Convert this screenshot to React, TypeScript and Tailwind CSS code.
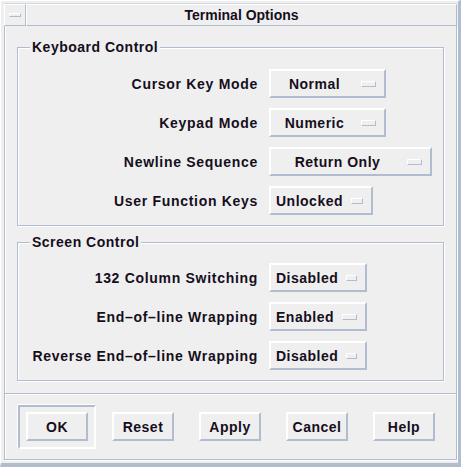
const raised2 = "border-2 border-t-white border-l-white border-r-[#b1bccf] border-b-[#b1bccf]"
const raised1 = "border border-t-white border-l-white border-r-[#b1bccf] border-b-[#b1bccf]"

const keyboardRows = [
    { label: "Cursor Key Mode", value: "Normal", w: "w-[117px]" },
    { label: "Keypad Mode", value: "Numeric", w: "w-[117px]" },
    { label: "Newline Sequence", value: "Return Only", w: "w-[163px]" },
    { label: "User Function Keys", value: "Unlocked", w: "w-[104px]" },
]

const screenRows = [
    { label: "132 Column Switching", value: "Disabled", w: "w-[98px]" },
    { label: "End–of–line Wrapping", value: "Enabled", w: "w-[98px]" },
    { label: "Reverse End–of–line Wrapping", value: "Disabled", w: "w-[98px]" },
]

const OptionMenu = ({ value, w }: { value: string; w: string }) => (
    <div className={`${w} h-[29px] flex items-center pl-[5px] pr-[8px] ${raised2}`}>
        <span className="flex-1 text-center whitespace-nowrap">{value}</span>
        <span className={`ml-[8px] w-[15px] h-[6px] ${raised1}`} />
    </div>
)

const Group = ({ title, rows, h, pt }: { title: string; rows: typeof keyboardRows; h: string; pt: string }) => (
    <div
        className={`relative mx-[12px] w-[427px] ${h} ${pt} pb-[10px] border border-[#b1bccf] shadow-[inset_1px_1px_0_#fff,1px_1px_0_#fff] flex flex-col gap-[10px]`}>
        <span className="absolute top-[-9px] left-[12px] px-[2px] bg-[#efefef] leading-[16px]">{title}</span>
        {rows.map((r) => (
            <div key={r.label} className="flex items-center">
                <span className="w-[240px] mr-[11px] text-right whitespace-nowrap tracking-[0.7px]">{r.label}</span>
                <OptionMenu value={r.value} w={r.w} />
            </div>
        ))}
    </div>
)

const PushButton = ({ label }: { label: string }) => (
    <div className={`w-[62px] h-[29px] flex items-center justify-center ${raised2}`}>{label}</div>
)

const App = () => {
    return (
        <div className="w-[466px] h-[470px] bg-white">
            <div
                className="w-[461px] h-[467px] bg-[#efefef] border-l border-t border-l-white border-t-white border-r-[3px] border-b-[4px] border-r-[#b1bccf] border-b-[#b1bccf] pl-[3px] pr-[1px] pt-[2px] font-['Liberation_Sans',sans-serif] font-bold text-[14px] leading-[16px] text-[#160e1c] tracking-[0.5px]">
                <div className="flex h-[23px] border-t border-t-[#d4d8e0]">
                    <div className={`w-[22px] flex items-center justify-center ${raised1}`}>
                        <span className={`w-[12px] h-[4px] ${raised1}`} />
                    </div>
                    <div className={`flex-1 flex items-center justify-center tracking-normal ${raised1}`}>
                        Terminal Options
                    </div>
                </div>

                <div className="h-[434px] flex flex-col border-l border-r border-b border-[#b1bccf] shadow-[inset_1px_0_0_#fff,1px_1px_0_#fff]">
                    <div className="mt-[21px]">
                        <Group title="Keyboard Control" rows={keyboardRows} h="h-[179px]" pt="pt-[21px]" />
                    </div>
                    <div className="mt-[16px]">
                        <Group title="Screen Control" rows={screenRows} h="h-[139px]" pt="pt-[20px]" />
                    </div>

                    <div className="mt-[12px] border-t border-b border-t-[#b1bccf] border-b-white" />

                    <div className="mt-[9px] h-[45px] flex items-center pl-[13px]">
                        <div className="w-[78px] h-[44px] flex items-center justify-center border-2 border-t-[#b1bccf] border-l-[#b1bccf] border-r-white border-b-white shadow-[-1px_-1px_0_#fff]">
                            <PushButton label="OK" />
                        </div>
                        <div className="ml-[16px] flex gap-[25px]">
                            <PushButton label="Reset" />
                            <PushButton label="Apply" />
                            <PushButton label="Cancel" />
                            <PushButton label="Help" />
                        </div>
                    </div>
                </div>
            </div>
        </div>
    )
}

export default App
